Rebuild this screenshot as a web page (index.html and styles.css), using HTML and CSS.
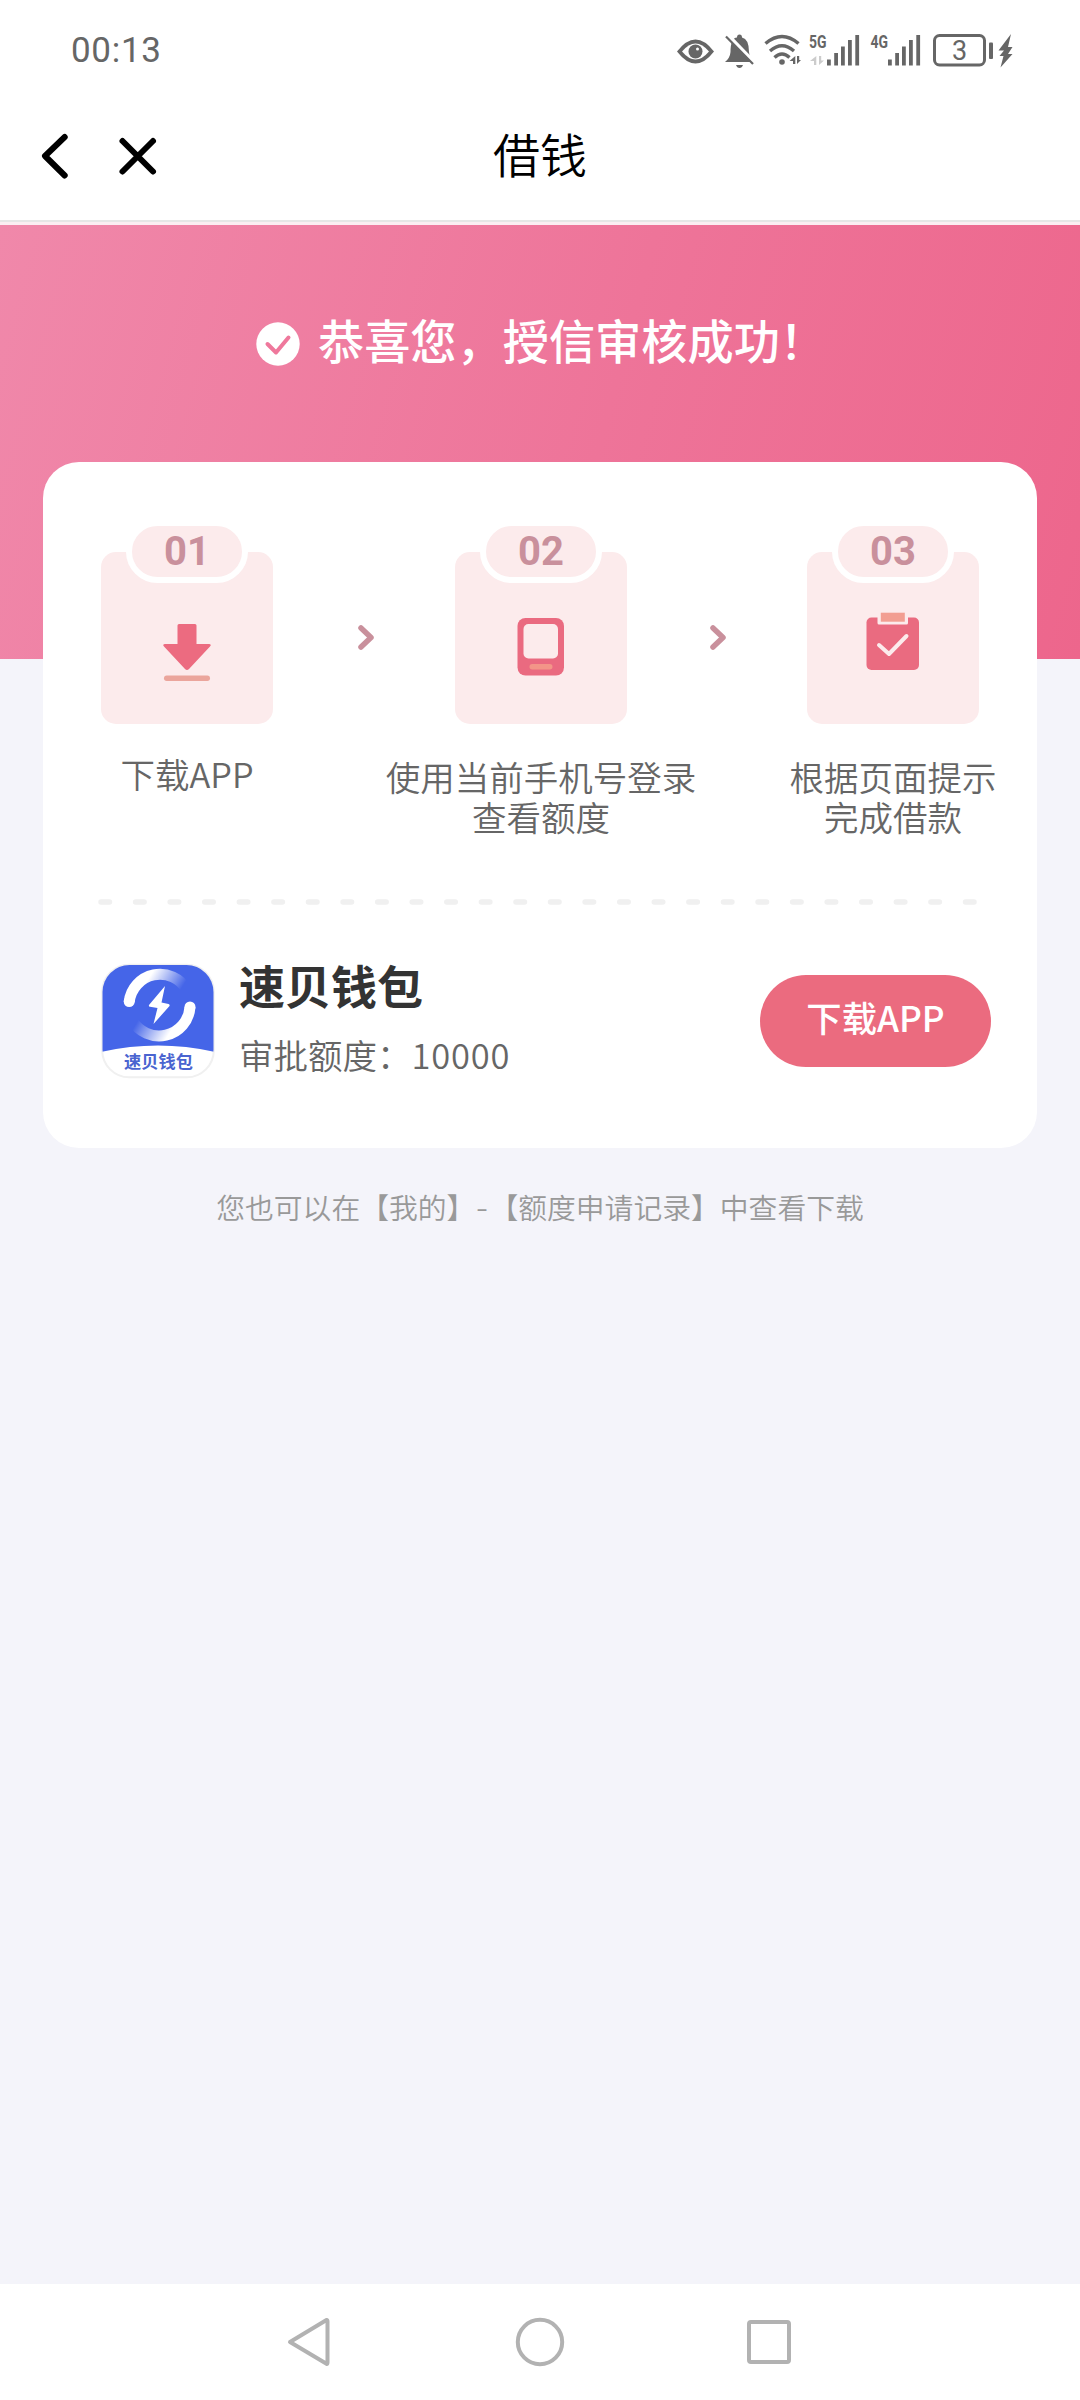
FILE: index.html
```html
<!DOCTYPE html>
<html lang="zh-CN">
<head>
<meta charset="utf-8">
<title>借钱</title>
<link rel="stylesheet" href="styles.css">
</head>
<body>
<div class="screen">
  <header class="status">
    <span class="clock">00:13</span>
    <svg class="status-icons" width="346" height="40" viewBox="672 30 346 40" fill="#666">
      <path d="M677 51.500Q695.500 27.500 714 51.500Q695.500 75.500 677 51.500Z"/>
      <path d="M682 51.500Q695.500 35.500 709 51.500Q695.500 67.500 682 51.500Z" fill="#fff"/>
      <circle cx="695.500" cy="51.500" r="7"/><circle cx="697.500" cy="49" r="1.500" fill="#fff"/>
      <path d="M725 62Q730 58 730.500 52Q730.500 38 737 37.500Q737 34.500 739.500 34.500Q742 34.500 742 37.500Q749 39 749 52Q749.500 58 753.500 62ZM736 65H743Q742 68 739.500 68Q737 68 736 65Z"/>
      <path d="M728 35L755 63" stroke="#fff" stroke-width="3.500"/>
      <path d="M726 36.500L753 64" stroke="#666" stroke-width="2.200"/>
      <g fill="none" stroke="#666" stroke-width="3.400"><path d="M765.500 43.500Q782 29.500 798.500 43.500"/><path d="M770 51Q782 40.500 794 51"/><path d="M774.500 57.500Q782 50.500 789.500 57.500" /></g>
      <circle cx="782" cy="62" r="2.800"/>
      <path d="M793 56V64H795.300V56L789.500 61H793ZM797 56V64L801 60H799.200V56Z"/>
      <text x="809" y="48" class="net" textLength="17.500" lengthAdjust="spacingAndGlyphs">5G</text>
      <path fill="#ccc" d="M814 56V65H816.300V56L810 61H814ZM819 56V65L824 60.500H821.200V56Z"/>
      <g id="bars"><path d="M827 59.500H830.800V65.500H827ZM834.200 53H838V65.500H834.200ZM841 46.500H844.800V65.500H841ZM848 40H851.800V65.500H848ZM855.300 35H859.100V65.500H855.300Z"/></g>
      <text x="870.500" y="48" class="net" textLength="17.500" lengthAdjust="spacingAndGlyphs">4G</text>
      <use href="#bars" x="61"/>
      <rect x="934.500" y="35.500" width="50" height="29.500" rx="5" fill="none" stroke="#666" stroke-width="3"/>
      <text x="959.700" y="60" class="battery" text-anchor="middle">3</text>
      <rect x="989" y="42.500" width="4" height="16.500" rx="1"/>
      <path d="M1011 34L998.500 50.500H1004L999.500 56H1003.500L1000.500 67.500L1012.500 54H1008L1012.500 47H1008Z"/>
    </svg>
  </header>
  <nav class="titlebar">
    <svg class="nav-icons" width="120" height="50" viewBox="40 130 120 50" fill="none" stroke="#000" stroke-linecap="round" stroke-linejoin="round" stroke-width="6"><path d="M64.700 137L45 156L64.700 175.500"/><path d="M122.500 141L153 171.500M153 141L122.500 171.500"/></svg>
    <h1>借钱</h1>
  </nav>
  <main>
    <div class="congrats">
      <svg width="44" height="44" viewBox="0 0 44 44"><circle cx="22" cy="22" r="21.700" fill="#fff"/><path d="M11.500 22L20 30.500L32.500 15.500" fill="none" stroke="#ef789c" stroke-width="4" stroke-linecap="round" stroke-linejoin="round"/></svg>
      <span>恭喜您，授信审核成功！</span>
    </div>
    <section class="card">
      <div class="steps">
        <div class="step">
          <div class="tile"><b class="number">01</b>
            <svg width="60" height="66" viewBox="0 0 60 66"><path d="M22 9H38Q39.500 9 39.500 10.500V29H52Q55 29.500 53 31.500L32 54Q30 56 28 54L7 31.500Q5 29.500 8 29H20.500V10.500Q20.500 9 22 9Z" fill="#ec6b80"/><rect x="7" y="60.500" width="46" height="5.500" rx="2.700" fill="#eba59c"/></svg>
          </div>
          <p class="single">下载APP</p>
        </div>
        <svg class="arrow" width="18" height="28" viewBox="0 0 18 28"><path d="M4 4L14 13.500L4 23"/></svg>
        <div class="step">
          <div class="tile"><b class="number">02</b>
            <svg width="60" height="66" viewBox="0 0 60 66"><rect x="6.500" y="3" width="46.500" height="57.500" rx="8" fill="#ea6a80"/><rect x="12.500" y="9" width="34.500" height="34.500" rx="5" fill="#fcebec"/><rect x="18.500" y="49" width="23" height="5.500" rx="2.700" fill="#f39588"/></svg>
          </div>
          <p>使用当前手机号登录<br>查看额度</p>
        </div>
        <svg class="arrow" width="18" height="28" viewBox="0 0 18 28"><path d="M3 4L13 13.500L3 23"/></svg>
        <div class="step">
          <div class="tile"><b class="number">03</b>
            <svg width="60" height="66" viewBox="0 0 60 66"><rect x="3.500" y="2.500" width="52.500" height="52.500" rx="5" fill="#ea6b80"/><rect x="14.500" y="-3" width="30.500" height="12.500" rx="1.500" fill="#fcebec"/><rect x="17.800" y="-2.300" width="24" height="9" fill="#f29e92"/><path d="M16 30L26 39L43.500 21" fill="none" stroke="#fcebec" stroke-width="4" stroke-linecap="round" stroke-linejoin="round"/></svg>
          </div>
          <p>根据页面提示<br>完成借款</p>
        </div>
      </div>
      <svg class="divider" width="880" height="6"><path d="M3 3H880" stroke="#f0f0f0" stroke-width="5.500" stroke-linecap="round" stroke-dasharray="8.500 26.080"/></svg>
      <div class="product">
        <svg class="logo" width="114" height="116" viewBox="0 0 114 116">
          <defs>
            <linearGradient id="fadeTop" x1="0" x2="1" y2=".3"><stop offset=".35" stop-color="#fff"/><stop offset=".97" stop-color="#fff" stop-opacity="0"/></linearGradient>
            <linearGradient id="fadeBottom" x1="1" x2="0" y1="1" y2=".7"><stop offset=".35" stop-color="#fff"/><stop offset=".97" stop-color="#fff" stop-opacity="0"/></linearGradient>
            <clipPath id="shape"><rect x="1.500" y="2" width="111" height="112" rx="27"/></clipPath>
          </defs>
          <rect x="1.200" y="1.700" width="111.600" height="112.600" rx="27" fill="#fff" stroke="#f0f0f0" stroke-width="2"/>
          <g clip-path="url(#shape)"><path d="M0 0H114V89Q57 76 0 89Z" fill="#4565e8"/></g>
          <path d="M28.200 39A31 31 0 0 1 86 27" fill="none" stroke="url(#fadeTop)" stroke-width="11"/>
          <circle cx="28.200" cy="38.500" r="5.500" fill="#fff"/>
          <path d="M89 44A31 31 0 0 1 31 57" fill="none" stroke="url(#fadeBottom)" stroke-width="11"/>
          <circle cx="89" cy="44" r="5.500" fill="#fff"/>
          <path d="M64 23L48 42Q47.500 43.500 49 43.800L56.500 45L52.500 61L68.500 43Q69 41.500 67.500 41L60.500 39.500Z" fill="#fff"/>
          <text x="57.500" y="104.500" text-anchor="middle">速贝钱包</text>
        </svg>
        <div class="info"><h2>速贝钱包</h2><p>审批额度：<span>10000</span></p></div>
        <a class="download">下载APP</a>
      </div>
    </section>
    <p class="hint">您也可以在【我的】<span>-</span>【额度申请记录】中查看下载</p>
  </main>
  <footer class="system-nav">
    <svg width="50" height="54" viewBox="284 2315 50 54"><path d="M290 2342L326.500 2320Q327.500 2319.800 327.500 2321.500V2362.500Q327.500 2364.200 326.500 2363.800Z"/></svg>
    <svg width="50" height="54" viewBox="514 2315 50 54"><circle cx="540" cy="2342" r="22.200"/></svg>
    <svg width="50" height="54" viewBox="744 2315 50 54"><rect x="749" y="2322" width="40" height="40" rx="2"/></svg>
  </footer>
</div>
</body>
</html>
```

FILE: styles.css
```css
* { box-sizing: border-box; margin: 0; padding: 0; }
body {
  font-family: "Noto Sans CJK SC", sans-serif;
  color: #666;
  background: #fff;
}
svg { display: block; flex: none; overflow: visible; }
.screen { display: flex; flex-direction: column; width: 1080px; height: 2400px; overflow: hidden; }
.status {
  display: flex;
  align-items: center;
  justify-content: space-between;
  height: 100px;
  padding: 0 62px 0 71px;
}
.clock { padding-top: 2px; font: 400 35px/40px Roboto, sans-serif; letter-spacing: .7px; }
.net { font: 700 18px Roboto, sans-serif; }
.battery { font: 400 27px Roboto, sans-serif; }
.titlebar {
  display: grid;
  grid-template-columns: 120px 1fr 120px;
  align-items: center;
  height: 125px;
  padding: 0 40px 13px;
  border-bottom: 3px solid #fbeef2;
  box-shadow: inset 0 -2px #e6e6e6;
}
.titlebar h1 { padding-bottom: 4px; font-size: 47px; font-weight: 350; line-height: 60px; color: #000; text-align: center; }
main {
  flex: 1;
  display: flex;
  flex-direction: column;
  align-items: center;
  background: linear-gradient(105deg, #f088aa 0%, #ee7499 55%, #ed668c 100%) 0 0 / 100% 434px no-repeat #f4f4fa;
}
.congrats {
  display: flex;
  align-items: center;
  align-self: flex-start;
  gap: 18px;
  height: 237px;
  padding-left: 256px;
  color: #fff;
  font-size: 46.2px;
  font-weight: 500;
  white-space: nowrap;
}
.congrats span { padding-bottom: 11px; }
.card { width: 994px; height: 686px; background: #fff; border-radius: 36px; padding: 90px 0 0 55px; }
.steps { display: grid; grid-template-columns: 172px 182px 172px 180px 172px; height: 347px; padding-left: 3px; }
.step { display: flex; flex-direction: column; align-items: center; gap: 32px; }
.tile {
  display: flex;
  flex-direction: column;
  align-items: center;
  width: 172px;
  height: 172px;
  border-radius: 15px;
  background: #fcebec;
}
.number {
  width: 122px;
  height: 63px;
  margin-top: -32px;
  border: 6px solid #fff;
  border-radius: 32px;
  background: #fcebec;
  font: 700 40px/52px Roboto, sans-serif;
  text-align: center;
  color: #c9909c;
}
.tile svg { margin-top: 32px; }
.step p { font-size: 34.5px; font-weight: 350; line-height: 40px; text-align: center; white-space: nowrap; }
.step .single { margin-top: -3px; }
.arrow { justify-self: center; margin: 72px 0 0 4px; fill: none; stroke: #c9909c; stroke-width: 5.5; stroke-linecap: round; stroke-linejoin: round; }
.product { display: flex; align-items: center; margin-top: 55px; padding-right: 46px; height: 122px; }
.logo { margin-left: 3px; }
.logo text { font-size: 17.2px; font-weight: 700; fill: #4a64d0; }
.info { flex: 1; margin-bottom: 9px; padding-left: 24px; }
.info h2 { font-size: 46px; font-weight: 700; line-height: 64px; color: #333; }
.info p { margin-top: 10px; font-size: 34.5px; font-weight: 350; line-height: 56px; }
.info span { letter-spacing: .8px; }
.download {
  width: 231px;
  height: 92px;
  border-radius: 46px;
  background: #eb6b7f;
  color: #fff;
  font-size: 35.3px;
  font-weight: 500;
  line-height: 83px;
  text-align: center;
}
.hint { margin-top: 38px; font-size: 28.8px; font-weight: 350; line-height: 42px; color: #999; white-space: nowrap; }
.hint span { font-family: Inter, sans-serif; letter-spacing: 1px; }
.system-nav { display: flex; align-items: center; justify-content: space-between; height: 116px; padding: 0 286px 0 284px; background: #fff; }
.system-nav svg { fill: none; stroke: #b2b2b2; stroke-width: 4; stroke-linejoin: round; }
```
